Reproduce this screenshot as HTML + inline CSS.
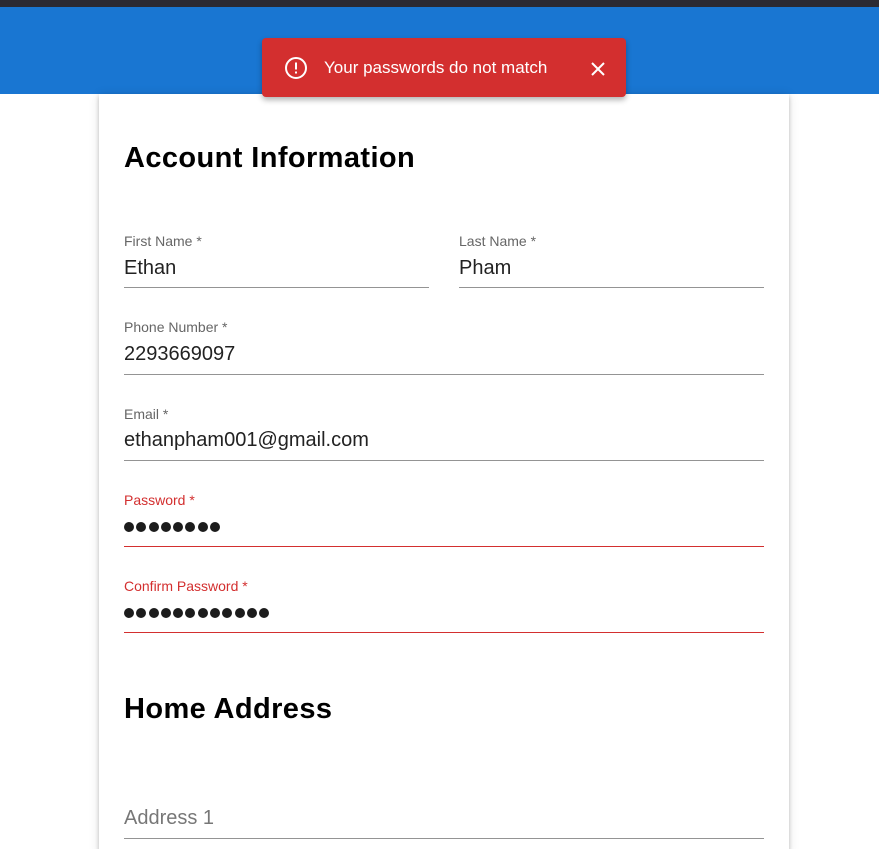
<!DOCTYPE html>
<html><head><meta charset="utf-8"><style>
*{margin:0;padding:0;box-sizing:border-box}
html,body{width:879px;height:849px;overflow:hidden}
body{background:#fff;font-family:"Liberation Sans",Arial,sans-serif;position:relative}
.top{position:absolute;left:0;top:0;width:879px;height:7px;background:#2b2a33}
.bar{position:absolute;left:0;top:7px;width:879px;height:87px;background:#1976d2}
.card{position:absolute;left:99px;top:94px;width:690px;height:760px;background:#fff;box-shadow:0 2px 4px rgba(0,0,0,.2),0 1px 10px rgba(0,0,0,.12)}
.toast{position:absolute;left:262px;top:38px;width:364px;height:59px;background:#d32f2f;border-radius:4px;box-shadow:0 3px 6px rgba(0,0,0,.3);color:#fff;font-size:17px}
.toast .t{position:absolute;left:62px;top:20px}
h2{position:absolute;left:124px;font-size:29px;letter-spacing:0.4px;font-weight:bold;color:#000}
.f{position:absolute;border-bottom:1px solid #949494}
.f .l{position:absolute;left:0;font-size:14px;color:#666}
.f .v{position:absolute;left:0;font-size:20px;color:#222}
.err{border-bottom-color:#d32f2f}
.err .l{color:#d32f2f}
.dots{position:absolute;left:0;display:flex;gap:2.3px}
.dots i{width:10px;height:10px;border-radius:50%;background:#1c1c1c;display:block}
</style></head><body>
<div class="top"></div><div class="bar"></div>
<div class="card"></div>
<div class="toast">
<svg style="position:absolute;left:22px;top:18px" width="24" height="24" viewBox="0 0 24 24"><circle cx="12" cy="12" r="10" fill="none" stroke="#fff" stroke-width="2"/><rect x="11" y="6.5" width="2" height="7" fill="#fff"/><rect x="11" y="15.5" width="2" height="2" fill="#fff"/></svg>
<span class="t">Your passwords do not match</span>
<svg style="position:absolute;left:328px;top:23px" width="16" height="16" viewBox="0 0 16 16"><path d="M2 2L14 14M14 2L2 14" stroke="#fff" stroke-width="2"/></svg>
</div>
<h2 style="top:142px">Account Information</h2>
<div class="f" style="left:124px;top:230px;width:305px;height:58px"><span class="l" style="top:3px">First Name *</span><span class="v" style="top:27px">Ethan</span></div>
<div class="f" style="left:459px;top:230px;width:305px;height:58px"><span class="l" style="top:3px">Last Name *</span><span class="v" style="top:27px">Pham</span></div>
<div class="f" style="left:124px;top:316px;width:640px;height:59px"><span class="l" style="top:3px">Phone Number *</span><span class="v" style="top:27px">2293669097</span></div>
<div class="f" style="left:124px;top:403px;width:640px;height:58px"><span class="l" style="top:3px">Email *</span><span class="v" style="top:26px">ethanpham001@gmail.com</span></div>
<div class="f err" style="left:124px;top:489px;width:640px;height:58px"><span class="l" style="top:3px">Password *</span><div class="dots" style="top:33px"><i></i><i></i><i></i><i></i><i></i><i></i><i></i><i></i></div></div>
<div class="f err" style="left:124px;top:575px;width:640px;height:58px"><span class="l" style="top:3px">Confirm Password *</span><div class="dots" style="top:33px"><i></i><i></i><i></i><i></i><i></i><i></i><i></i><i></i><i></i><i></i><i></i><i></i></div></div>
<h2 style="top:693px">Home Address</h2>
<div class="f" style="left:124px;top:790px;width:640px;height:49px"><span class="v" style="top:17px;color:#777">Address 1</span></div>
</body></html>
